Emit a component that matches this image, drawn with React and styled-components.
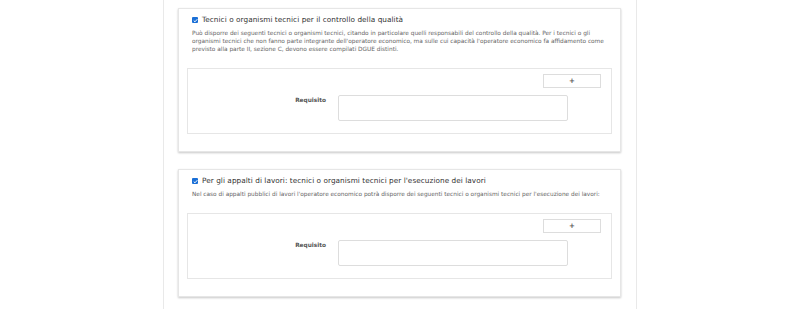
import styled, { createGlobalStyle } from "styled-components";

const GlobalStyle = createGlobalStyle`
    body {
        margin: 0;
        background-color: #ffffff;
        font-family: "DejaVu Sans", Verdana, sans-serif;
    }
`

const sezioni = [
    {
        titolo: "Tecnici o organismi tecnici per il controllo della qualità",
        testo: "Può disporre dei seguenti tecnici o organismi tecnici, citando in particolare quelli responsabili del controllo della qualità. Per i tecnici o gli organismi tecnici che non fanno parte integrante dell'operatore economico, ma sulle cui capacità l'operatore economico fa affidamento come previsto alla parte II, sezione C, devono essere compilati DGUE distinti.",
    },
    {
        titolo: "Per gli appalti di lavori: tecnici o organismi tecnici per l'esecuzione dei lavori",
        testo: "Nel caso di appalti pubblici di lavori l'operatore economico potrà disporre dei seguenti tecnici o organismi tecnici per l'esecuzione dei lavori:",
    },
]

export default function App() {
    return (
        <>
            <GlobalStyle />
            <Pagina>
                {sezioni.map((s) => (
                    <Card key={s.titolo}>
                        <Titolo>
                            <Check>
                                <svg width="5" height="5" viewBox="0 0 10 10">
                                    <path d="M1.5 5.2 L4 7.6 L8.6 2.4" fill="none" stroke="#fff" strokeWidth="2" />
                                </svg>
                            </Check>
                            {s.titolo}
                        </Titolo>
                        <Descrizione>{s.testo}</Descrizione>
                        <Riquadro>
                            <Azioni>
                                <Aggiungi>+</Aggiungi>
                            </Azioni>
                            <Riga>
                                <Etichetta>Requisito</Etichetta>
                                <Campo />
                            </Riga>
                        </Riquadro>
                    </Card>
                ))}
            </Pagina>
        </>
    );
}

const Pagina = styled.div`
    width: 474px;
    min-height: 309px;
    margin: 0 auto;
    padding: 8px 15px 0 14px;
    box-sizing: border-box;
    border-left: 1px solid #e9e9e9;
    border-right: 1px solid #e9e9e9;
    display: flex;
    flex-direction: column;
    gap: 17px;
`
const Card = styled.div`
    border: 1px solid #e6e6e6;
    box-shadow: 0 1px 2px rgba(0, 0, 0, 0.22);
    padding: 5px 8px 17px 8px;
    background-color: #ffffff;
`
const Titolo = styled.div`
    display: flex;
    align-items: center;
    gap: 4px;
    padding-left: 5px;
    font-size: 7.3px;
    line-height: 12px;
    letter-spacing: 0.05px;
    color: #333333;
`
const Check = styled.span`
    width: 6px;
    height: 6px;
    border-radius: 1px;
    background-color: #1a6fd6;
    display: flex;
    align-items: center;
    justify-content: center;
`
const Descrizione = styled.div`
    margin-top: 3px;
    padding-left: 5px;
    font-size: 5.8px;
    line-height: 8px;
    color: #666666;
`
const Riquadro = styled.div`
    margin-top: 15px;
    border: 1px solid #e6e6e6;
    padding: 5px 10px 12px 0;
`
const Azioni = styled.div`
    display: flex;
    justify-content: flex-end;
`
const Aggiungi = styled.div`
    width: 56px;
    height: 12px;
    border: 1px solid #dddddd;
    font-size: 7px;
    font-weight: bold;
    line-height: 12px;
    text-align: center;
    color: #555555;
`
const Riga = styled.div`
    display: flex;
    align-items: flex-start;
    gap: 12px;
    margin-top: 7px;
`
const Etichetta = styled.div`
    width: 138px;
    text-align: right;
    font-size: 5.8px;
    font-weight: bold;
    line-height: 8px;
    color: #555555;
    padding-top: 1px;
`
const Campo = styled.div`
    width: 228px;
    height: 24px;
    border: 1px solid #dddddd;
    border-radius: 2px;
`
